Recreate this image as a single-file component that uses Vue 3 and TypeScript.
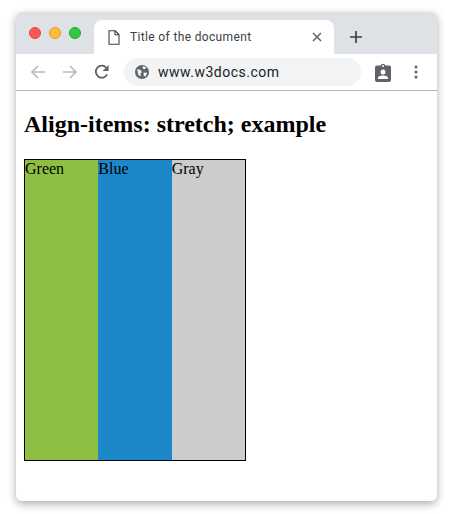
<script setup lang="ts">
const items: { label: string; cls: string }[] = [
  { label: 'Green', cls: 'green' },
  { label: 'Blue', cls: 'blue' },
  { label: 'Gray', cls: 'gray' },
]
</script>

<template>
  <div class="stage">
    <div class="window">
      <div class="tabstrip">
        <div class="lights">
          <span class="light red"></span>
          <span class="light yellow"></span>
          <span class="light lime"></span>
        </div>
        <div class="tab">
          <svg class="doc" width="12" height="15" viewBox="0 0 12 15">
            <path d="M1 .8h6.2L11 4.6v9.6H1z M7 .8v4h4" fill="none" stroke="#3c4043" stroke-width="1.1" />
          </svg>
          <span class="tab-title">Title of the document</span>
          <svg class="close" width="10" height="10" viewBox="0 0 10 10">
            <path d="M1 1l8 8M9 1l-8 8" stroke="#5f6368" stroke-width="1.5" />
          </svg>
        </div>
        <svg class="plus" width="14" height="14" viewBox="0 0 14 14">
          <path d="M7 1v12M1 7h12" stroke="#3c4043" stroke-width="1.7" />
        </svg>
      </div>
      <div class="toolbar">
        <svg class="nav first" width="16" height="16" viewBox="0 0 16 16">
          <path d="M15 8H2M8 2L2 8l6 6" fill="none" stroke="#b8babd" stroke-width="1.7" />
        </svg>
        <svg class="nav" width="16" height="16" viewBox="0 0 16 16">
          <path d="M1 8h13M8 2l6 6-6 6" fill="none" stroke="#b8babd" stroke-width="1.7" />
        </svg>
        <svg class="nav" width="16" height="16" viewBox="0 0 16 16">
          <path d="M13.2 10.4A6 6 0 1 1 12.4 3.8" fill="none" stroke="#5f6368" stroke-width="1.8" />
          <path d="M14.6 1v6h-6z" fill="#5f6368" />
        </svg>
        <div class="omnibox">
          <svg width="14" height="14" viewBox="0 0 13 13">
            <circle cx="6.5" cy="6.5" r="6.5" fill="#5f6368" />
            <path d="M2 4l3 .5 1.5 2L5 8l.5 3L3 9zM7 1.2l3.6 1L9.2 4 7.4 3.6zM8 7l3.4.2-1.6 3.4L8 10z" fill="#f1f3f4" />
          </svg>
          <span class="url">www.w3docs.com</span>
        </div>
        <svg class="clip" width="16" height="19" viewBox="0 0 16 19">
          <path d="M2 2.5h3.4a2.8 2.8 0 0 1 5.2 0H14a2 2 0 0 1 2 2V17a2 2 0 0 1-2 2H2a2 2 0 0 1-2-2V4.500a2 2 0 0 1 2-2z" fill="#5f6368" />
          <circle cx="8" cy="3" r="1" fill="#fff" />
          <circle cx="8" cy="9" r="2.500" fill="#fff" />
          <path d="M3 16v-1.200c0-1.600 3.200-2.400 5-2.400s5 .8 5 2.400V16z" fill="#fff" />
        </svg>
        <svg class="menu" width="4" height="14" viewBox="0 0 4 14">
          <circle cx="2" cy="2" r="1.500" fill="#5f6368" />
          <circle cx="2" cy="7" r="1.500" fill="#5f6368" />
          <circle cx="2" cy="12" r="1.500" fill="#5f6368" />
        </svg>
      </div>
      <div class="page">
        <h2 class="heading">Align-items: stretch; example</h2>
        <div class="box">
          <div v-for="item in items" :key="item.label" class="cell" :class="item.cls">{{ item.label }}</div>
        </div>
      </div>
    </div>
  </div>
</template>

<style scoped>
.stage {
  width: 453px;
  height: 514px;
  padding: 12px 16px 13px;
  box-sizing: border-box;
  background: #fff;
  overflow: hidden;
}
.window {
  height: 489px;
  border-radius: 6px;
  overflow: hidden;
  background: #fff;
  box-shadow: 0 3px 8px rgba(0, 0, 0, 0.32);
  display: flex;
  flex-direction: column;
}
.tabstrip {
  height: 42px;
  flex: none;
  background: #dee1e6;
  display: flex;
  align-items: flex-end;
}
.lights {
  display: flex;
  gap: 8px;
  align-self: flex-start;
  margin: 15px 0 0 13px;
}
.light {
  width: 12px;
  height: 12px;
  border-radius: 50%;
  box-sizing: border-box;
}
.red { background: #fc5753; border: 1px solid #e0443e; }
.yellow { background: #fdbc40; border: 1px solid #dea123; }
.lime { background: #33c748; border: 1px solid #1bac2c; }
.tab {
  width: 240px;
  height: 34px;
  margin-left: 13px;
  background: #fff;
  border-radius: 8px 8px 0 0;
  display: flex;
  align-items: center;
  padding: 0 12px 0 14px;
  box-sizing: border-box;
}
.doc { flex: none; }
.tab-title {
  margin-left: 10px;
  font: 12px "Roboto", "Liberation Sans", sans-serif;
  letter-spacing: 0.35px;
  color: #3c4043;
  flex: 1;
  white-space: nowrap;
}
.close { flex: none; }
.plus { margin: 0 0 10px 15px; flex: none; }
.toolbar {
  height: 36px;
  flex: none;
  box-sizing: border-box;
  display: flex;
  align-items: center;
  background: #fff;
}
.nav { margin-left: 16px; flex: none; }
.nav.first { margin-left: 14px; }
.omnibox {
  width: 237px;
  height: 28px;
  margin-left: 14px;
  border-radius: 14px;
  background: #f1f3f4;
  display: flex;
  align-items: center;
  padding-left: 11px;
  box-sizing: border-box;
  flex: none;
}
.url {
  margin-left: 9px;
  font: 14px "Roboto", "Liberation Sans", sans-serif;
  letter-spacing: 0.5px;
  color: #202124;
}
.clip { margin-left: 14px; flex: none; }
.menu { margin-left: 23px; flex: none; }
.page {
  flex: 1;
  border-top: 1px solid #b5b5b5;
  padding: 0 8px;
}
.heading {
  margin: 19px 0 21px;
  font: bold 24px/28px "Liberation Serif", serif;
  color: #000;
}
.box {
  width: 222px;
  height: 302px;
  box-sizing: border-box;
  border: 1px solid #000;
  display: flex;
  align-items: stretch;
}
.cell {
  flex: 1;
  font: 16px/18px "Liberation Serif", serif;
  color: #000;
}
.green { background: #8ebf42; }
.blue { background: #1c87c9; }
.gray { background: #cccccc; }
</style>
